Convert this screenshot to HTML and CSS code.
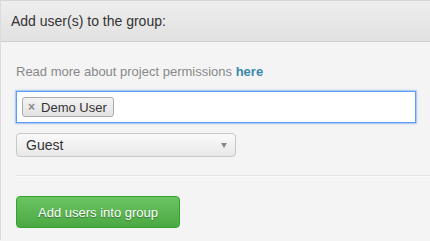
FILE: index.html
```html
<!DOCTYPE html>
<html>
<head>
<meta charset="utf-8">
<link rel="stylesheet" href="styles.css">
</head>
<body>
<div class="panel">
  <div class="panel-head">Add user(s) to the group:</div>
  <div class="panel-body">
    <p class="hint">Read more about project permissions <a class="hint-link" href="#">here</a></p>
    <div class="token-input">
      <span class="token"><span class="token-x">×</span>Demo User</span>
    </div>
    <div class="select">
      <span class="select-value">Guest</span>
      <span class="select-arrow"></span>
    </div>
    <div class="divider"></div>
    <button class="btn-add">Add users into group</button>
  </div>
</div>
</body>
</html>
```
FILE: styles.css
```css
html, body {
  margin: 0;
  padding: 0;
  background: #f4f4f4;
}
body {
  font-family: "Liberation Sans", Arial, sans-serif;
  width: 430px;
  height: 241px;
  overflow: hidden;
}
.panel {
  border-top: 1px solid #d6d6d6;
  border-left: 1px solid #dcdcdc;
  height: 240px;
  box-sizing: border-box;
  background: #f4f4f4;
}
.panel-head {
  height: 40px;
  line-height: 40px;
  padding-left: 10px;
  font-size: 14px;
  color: #333;
  background: linear-gradient(#eeeeee, #e1e1e1);
  border-bottom: 1px solid #cfcfcf;
}
.panel-body {
  padding: 21px 0 0 15px;
  display: flex;
  flex-direction: column;
  align-items: flex-start;
}
.hint {
  margin: 0;
  font-size: 13px;
  line-height: 18px;
  color: #888;
}
.hint-link {
  color: #3b88ad;
  font-weight: bold;
  text-decoration: none;
}
.token-input {
  margin-top: 10px;
  width: 400px;
  height: 32px;
  box-sizing: border-box;
  background: #fff;
  border: 1px solid #5c9cf2;
  box-shadow: 0 0 0 1px rgba(110, 160, 240, 0.35), 0 0 3px rgba(90, 150, 240, 0.5);
  display: flex;
  align-items: center;
  padding-left: 5px;
}
.token {
  display: flex;
  align-items: center;
  height: 20px;
  box-sizing: border-box;
  padding: 0 6px 0 5px;
  border: 1px solid #aaa;
  border-radius: 3px;
  background: linear-gradient(#f4f4f4, #e2e2e2);
  font-size: 13px;
  color: #333;
}
.token-x {
  color: #888;
  font-weight: bold;
  font-size: 12px;
  margin-right: 6px;
}
.select {
  margin-top: 10px;
  width: 220px;
  height: 24px;
  box-sizing: border-box;
  border: 1px solid #c8c8c8;
  border-radius: 4px;
  background: linear-gradient(#fafafa, #e8e8e8);
  display: flex;
  align-items: center;
  justify-content: space-between;
  padding: 0 8px 0 9px;
}
.select-value {
  font-size: 14px;
  color: #333;
}
.select-arrow {
  width: 0;
  height: 0;
  border-left: 3.5px solid transparent;
  border-right: 3.5px solid transparent;
  border-top: 5px solid #888;
  margin-top: 1px;
}
.divider {
  margin-top: 18px;
  align-self: stretch;
  height: 0;
  border-top: 1px solid #e2e2e2;
  border-bottom: 1px solid #fbfbfb;
}
.btn-add {
  margin-top: 19px;
  width: 164px;
  height: 32px;
  border: 1px solid #2fa52a;
  border-radius: 4px;
  background: linear-gradient(#6cc463, #4aa842);
  color: #fff;
  font-family: "Liberation Sans", Arial, sans-serif;
  font-size: 13px;
  text-shadow: 0 1px 1px rgba(0, 0, 0, 0.35);
  padding: 0;
}
```
